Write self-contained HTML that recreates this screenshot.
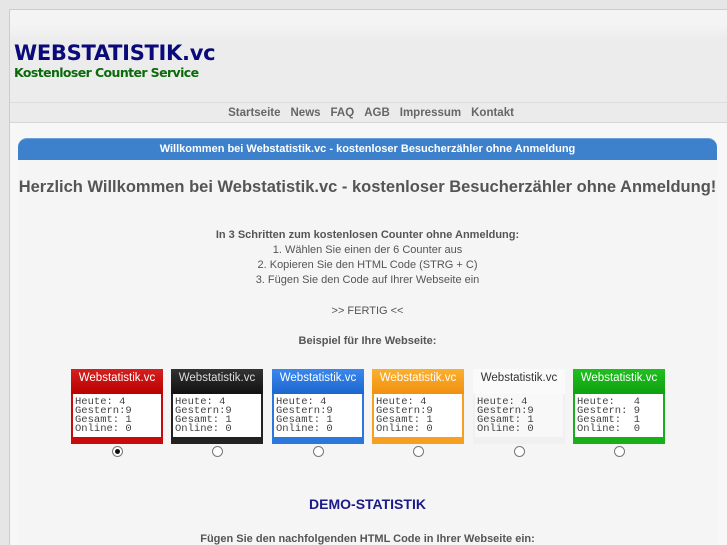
<!DOCTYPE html>
<html><head><meta charset="utf-8"><style>
*{margin:0;padding:0;box-sizing:border-box}
html,body{width:727px;height:545px;overflow:hidden}
body{background:#e6e6e6;font-family:"Liberation Sans",sans-serif;color:#555;position:relative}
#wrap{position:absolute;left:9px;top:9px;width:718px;height:536px;border-left:1px solid #ccc;border-top:1px solid #ccc;background:#f7f7f7;overflow:hidden}
#head{position:absolute;left:0;top:0;width:718px;height:92px;background:linear-gradient(#f4f4f4 0,#f4f4f4 15px,#ececec 30px,#ececec)}
#logo{position:absolute;left:4px;top:31px;font:bold 21px "DejaVu Sans",sans-serif;color:#0a0a7a;letter-spacing:-0.3px}
#sub{position:absolute;left:4px;top:55px;font:bold 12.5px "DejaVu Sans",sans-serif;color:#0a6a0a;letter-spacing:-0.6px}
#nav{position:absolute;left:0;top:92px;width:718px;height:21px;background:#ebebeb;border-top:1px solid #ddd;border-bottom:1px solid #d6d6d6;font-weight:bold;font-size:11.5px;color:#666;text-align:center;padding-left:4px;line-height:20px}
#nav span{margin:0 5px}
#bar{position:absolute;left:8px;top:128px;width:699px;height:22px;background:#3d80cc;border-radius:9px 9px 0 0;color:#fff;font-size:11px;font-weight:bold;text-align:center;line-height:21px;border-top:1px solid #6aa0dd}
#body{position:absolute;left:8px;top:150px;width:699px;height:390px;background:#f5f5f5;text-align:center}
h1{position:absolute;left:0;width:699px;top:18px;font-size:16.5px;color:#555;font-weight:bold}
.t{position:absolute;left:0;width:699px;font-size:11px;color:#555}
.c{position:absolute;top:209px;width:92px;height:75px;font-family:"Liberation Mono",monospace}
.c .h{height:25px;color:#fff;font:11.5px "Liberation Sans",sans-serif;text-align:center;line-height:19px}
.c .b{position:absolute;left:2px;right:2px;top:25px;height:43px;background:#fff;font-size:10.5px;line-height:9px;color:#444;text-align:left;padding:4px 0 0 2px;white-space:pre}
.r{position:absolute;top:286px;width:11px;height:11px;border:1px solid #777;border-radius:50%;background:#fff}
</style></head><body>
<div id="wrap">
<div id="head"><div id="logo">WEBSTATISTIK.vc</div><div id="sub">Kostenloser Counter Service</div></div>
<div id="nav"><span>Startseite</span><span>News</span><span>FAQ</span><span>AGB</span><span>Impressum</span><span>Kontakt</span></div>
<div id="bar">Willkommen bei Webstatistik.vc - kostenloser Besucherzähler ohne Anmeldung</div>
<div id="body">
<h1>Herzlich Willkommen bei Webstatistik.vc - kostenloser Besucherzähler ohne Anmeldung!</h1>
<div class="t" style="top:69px;font-weight:bold">In 3 Schritten zum kostenlosen Counter ohne Anmeldung:</div>
<div class="t" style="top:84px">1. Wählen Sie einen der 6 Counter aus</div>
<div class="t" style="top:99px">2. Kopieren Sie den HTML Code (STRG + C)</div>
<div class="t" style="top:114px">3. Fügen Sie den Code auf Ihrer Webseite ein</div>
<div class="t" style="top:145px">&gt;&gt; FERTIG &lt;&lt;</div>
<div class="t" style="top:175px;font-weight:bold">Beispiel für Ihre Webseite:</div>

<div class="c" style="left:53px;background:#c80a0a"><div class="h" style="background:linear-gradient(#d42020,#b00)">Webstatistik.vc</div><div class="b">Heute: 4
Gestern:9
Gesamt: 1
Online: 0</div></div>
<div class="c" style="left:153px;background:#222"><div class="h" style="background:linear-gradient(#333,#111);color:#ddd">Webstatistik.vc</div><div class="b">Heute: 4
Gestern:9
Gesamt: 1
Online: 0</div></div>
<div class="c" style="left:254px;background:#2a78dd"><div class="h" style="background:linear-gradient(#3a88ee,#1c66cc)">Webstatistik.vc</div><div class="b">Heute: 4
Gestern:9
Gesamt: 1
Online: 0</div></div>
<div class="c" style="left:354px;background:#f5a020"><div class="h" style="background:linear-gradient(#fbb030,#f09010)">Webstatistik.vc</div><div class="b">Heute: 4
Gestern:9
Gesamt: 1
Online: 0</div></div>
<div class="c" style="left:455px;background:#f0f0f0"><div class="h" style="background:#fafafa;color:#333">Webstatistik.vc</div><div class="b" style="background:#f8f8f8">Heute: 4
Gestern:9
Gesamt: 1
Online: 0</div></div>
<div class="c" style="left:555px;background:#18b018"><div class="h" style="background:linear-gradient(#20c020,#10a010)">Webstatistik.vc</div><div class="b">Heute:   4
Gestern: 9
Gesamt:  1
Online:  0</div></div>

<div class="r" style="left:94px"><div style="width:5px;height:5px;background:#111;border-radius:50%;margin:2px"></div></div>
<div class="r" style="left:194px"></div>
<div class="r" style="left:295px"></div>
<div class="r" style="left:395px"></div>
<div class="r" style="left:496px"></div>
<div class="r" style="left:596px"></div>

<div class="t" style="top:336px;font-size:14px;font-weight:bold;color:#1a1a8a">DEMO-STATISTIK</div>
<div class="t" style="top:373px;font-weight:bold">Fügen Sie den nachfolgenden HTML Code in Ihrer Webseite ein:</div>
</div>
</div>
</body></html>
